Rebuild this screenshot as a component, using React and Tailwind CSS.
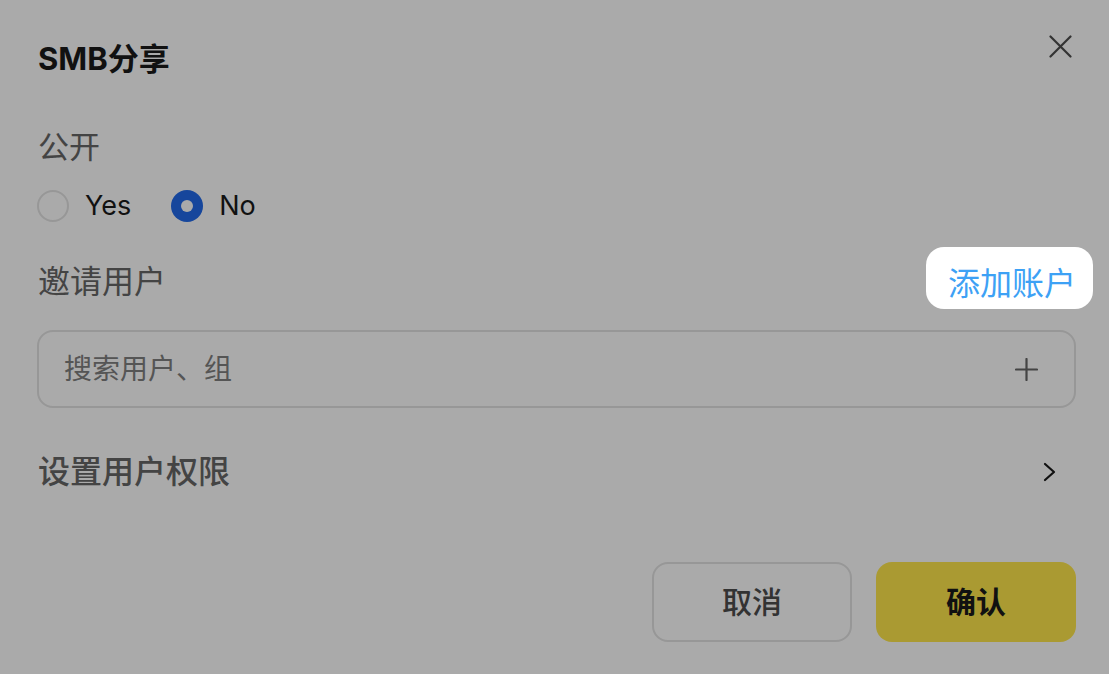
import { useState } from 'react';

const font = "font-[family-name:Inter,'Noto_Sans_CJK_SC',sans-serif]";

function Radio({ checked, label, onClick }) {
  return (
    <button type="button" onClick={onClick} className="flex items-center gap-[16px]">
      {checked ? (
        <span className="flex h-[32px] w-[32px] items-center justify-center rounded-full bg-[#216aea]">
          <span className="h-[12px] w-[12px] rounded-full bg-white" />
        </span>
      ) : (
        <span className="h-[32px] w-[32px] rounded-full border-2 border-[#e3e3e3] bg-white" />
      )}
      <span className="text-[27px] leading-[40px] text-[#1a1a1a]">{label}</span>
    </button>
  );
}

export default function App() {
  const [isPublic, setIsPublic] = useState(false);
  const [query, setQuery] = useState('');

  return (
    <div className={`relative h-[674px] w-[1109px] overflow-hidden bg-white ${font}`}>
      <div className="flex h-full flex-col pl-[37px] pr-[33px] pt-[37px]">
        <div className="flex items-start justify-between">
          <h2 className="pl-[1px] text-[31px] font-bold leading-[44px] text-[#1a1a1a]">SMB分享</h2>
          <button type="button" className="mr-[4px] mt-[-2px] text-[#4d4d4d]">
            <svg width="23" height="23" viewBox="0 0 23 23" fill="none" stroke="currentColor" strokeWidth="2.2" strokeLinecap="round">
              <path d="M1.5 1.5L21.5 21.5M21.5 1.5L1.5 21.5" />
            </svg>
          </button>
        </div>

        <div className="mt-[46px] pl-[1px] text-[31px] leading-[40px] text-[#666666]">公开</div>

        <div className="mt-[19px] flex items-center gap-[40px]">
          <Radio checked={isPublic} label="Yes" onClick={() => setIsPublic(true)} />
          <Radio checked={!isPublic} label="No" onClick={() => setIsPublic(false)} />
        </div>

        <div className="mt-[21px] flex items-start justify-between">
          <div className="mt-[15px] pl-[1px] text-[32px] leading-[40px] text-[#666666]">邀请用户</div>
          <button
            type="button"
            className="relative z-20 mr-[-17px] rounded-[18px] bg-white pb-[5px] pl-[22px] pr-[17px] pt-[17px] text-[32px] leading-[40px] text-[#3da1f5]"
          >
            添加账户
          </button>
        </div>

        <div className="mt-[21px] flex h-[78px] items-center rounded-[16px] border-2 border-[#e3e3e3] pl-[25px] pr-[36px]">
          <input
            value={query}
            onChange={(e) => setQuery(e.target.value)}
            placeholder="搜索用户、组"
            className="flex-1 bg-transparent text-[28px] text-[#333] outline-none placeholder:text-[#808080]"
          />
          <svg width="23" height="23" viewBox="0 0 23 23" fill="none" stroke="#666666" strokeWidth="2.2" strokeLinecap="round">
            <path d="M11.5 1V22M1 11.5H22" />
          </svg>
        </div>

        <button type="button" className="mt-[44px] flex h-[40px] items-center justify-between pr-[20px]">
          <span className="pl-[1px] text-[32px] font-medium leading-[40px] text-[#666666]">设置用户权限</span>
          <svg width="13" height="20" viewBox="0 0 13 20" fill="none" stroke="#1a1a1a" strokeWidth="2.2" strokeLinecap="round" strokeLinejoin="round">
            <path d="M2 2L11 10L2 18" />
          </svg>
        </button>

        <div className="mt-[70px] flex justify-end gap-[24px]">
          <button
            type="button"
            className="h-[80px] w-[200px] rounded-[16px] border-2 border-[#e3e3e3] bg-white text-[30px] font-medium text-[#4d4d4d]"
          >
            取消
          </button>
          <button
            type="button"
            className="h-[80px] w-[200px] rounded-[16px] bg-[#ffe84c] text-[30px] font-bold text-[#1a1a1a]"
          >
            确认
          </button>
        </div>
      </div>

      {/* guide overlay, the 添加账户 button sits above it */}
      <div className="pointer-events-none absolute inset-0 z-10 bg-black/[0.333]" />
    </div>
  );
}
